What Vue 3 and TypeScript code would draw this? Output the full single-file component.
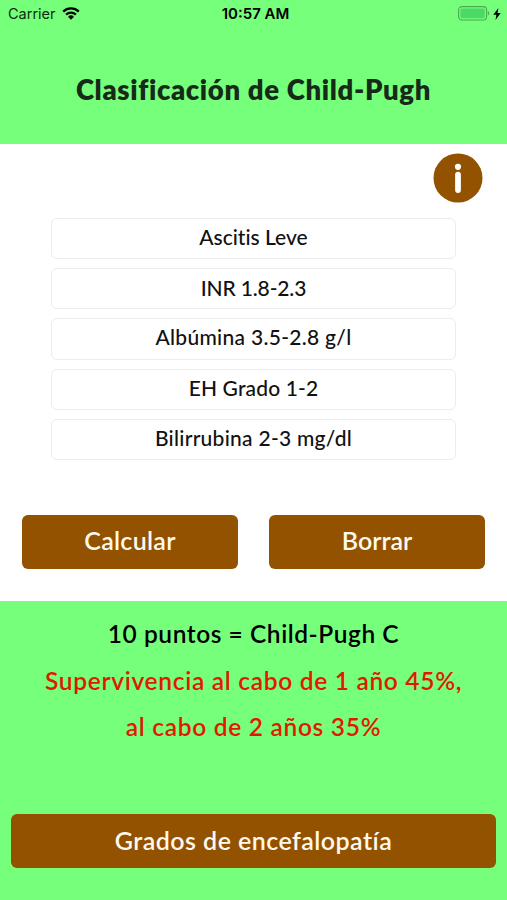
<script setup lang="ts">
import { ref } from 'vue'

interface Criterion {
  id: string
  label: string
}

const criteria = ref<Criterion[]>([
  { id: 'ascitis', label: 'Ascitis Leve' },
  { id: 'inr', label: 'INR 1.8-2.3' },
  { id: 'albumina', label: 'Albúmina 3.5-2.8 g/l' },
  { id: 'eh', label: 'EH Grado 1-2' },
  { id: 'bilirrubina', label: 'Bilirrubina 2-3 mg/dl' },
])
</script>

<template>
  <main class="screen">
    <div class="status">
      <div class="carrier">
        <span>Carrier</span>
        <svg class="wifi" viewBox="0 0 18 13" aria-hidden="true">
          <path d="M1.2 4.6a11.2 11.2 0 0 1 15.6 0M4.1 7.6a7 7 0 0 1 9.8 0" fill="none" stroke="currentColor" stroke-width="2.3" />
          <path d="M9 12.8 6 9.8a4.3 4.3 0 0 1 6 0z" fill="currentColor" />
        </svg>
      </div>
      <span class="time">10:57 AM</span>
      <div class="power">
        <svg class="battery" viewBox="0 0 32 15" aria-hidden="true">
          <rect x="0.6" y="0.6" width="28" height="13.4" rx="3.4" fill="none" stroke="#4da855" stroke-width="1.1" />
          <rect x="2.4" y="2.4" width="24.4" height="9.8" rx="1.8" fill="#4cd964" />
          <path d="M29.9 5v4.6c1.7-.6 1.7-4 0-4.6z" fill="#4da855" />
        </svg>
        <svg class="bolt" viewBox="0 0 8 12" aria-hidden="true">
          <path d="M5.4 0 0.3 6.8h3.1L2.5 12l5.2-7.1H4.5z" fill="currentColor" />
        </svg>
      </div>
    </div>

    <header class="header">
      <h1>Clasificación de Child-Pugh</h1>
    </header>

    <section class="form">
      <button class="info" type="button" aria-label="Información">
        <svg viewBox="0 0 50 50" aria-hidden="true">
          <circle cx="25" cy="25" r="24.5" fill="#925200" />
          <circle cx="25" cy="13.8" r="3.1" fill="#fff" />
          <rect x="22.1" y="18.8" width="5.8" height="21.2" rx="2.9" fill="#fff" />
        </svg>
      </button>
      <div class="fields">
        <button v-for="item in criteria" :key="item.id" :class="['field', item.id]" type="button">{{ item.label }}</button>
      </div>
      <div class="actions">
        <button class="action calculate" type="button">Calcular</button>
        <button class="action clear" type="button">Borrar</button>
      </div>
    </section>

    <section class="result">
      <p class="score">10 puntos = Child-Pugh C</p>
      <p class="survival">Supervivencia al cabo de 1 año 45%,</p>
      <p class="survival">al cabo de 2 años 35%</p>
      <button class="action grades" type="button">Grados de encefalopatía</button>
    </section>
  </main>
</template>

<style>
body {
  margin: 0;
}
</style>

<style scoped>
.screen {
  display: flex;
  flex-direction: column;
  width: 507px;
  height: 900px;
  overflow: hidden;
  background: #76ff7b;
  color: #000;
  font-family: Lato, "Open Sans", sans-serif;
  font-variant-ligatures: none;
}

button {
  margin: 0;
  padding: 0;
  border: 0;
  font: inherit;
  font-variant-ligatures: none;
  white-space: nowrap;
}

.status {
  display: grid;
  grid-template-columns: 1fr auto 1fr;
  align-items: center;
  box-sizing: border-box;
  height: 28px;
  padding: 0 6px 0 8px;
  font: 400 15px/28px Inter, sans-serif;
}

.carrier,
.power {
  display: flex;
  align-items: center;
}

.carrier {
  gap: 6px;
  color: #102a12;
  font-size: 14.5px;
}

.wifi {
  width: 18px;
  height: 13px;
  margin-top: -1px;
  color: #000;
}

.time {
  padding-left: 2px;
  font-weight: 600;
}

.power {
  justify-content: flex-end;
  gap: 3px;
}

.battery {
  width: 32px;
  height: 15px;
  margin-top: -1px;
}

.bolt {
  width: 8px;
  height: 12px;
  margin-top: -1px;
}

.header {
  height: 116px;
  text-align: center;
}

h1 {
  margin: 0;
  padding-top: 42px;
  color: #162a18;
  font-size: 27.5px;
  font-weight: 800;
  letter-spacing: 0.65px;
  line-height: 40px;
}

.form {
  box-sizing: border-box;
  height: 457px;
  padding: 9px 22px 0 22px;
  background: #fff;
}

.info {
  display: block;
  width: 50px;
  height: 50px;
  margin-left: auto;
  margin-right: 2px;
  background: none;
}

.info svg {
  display: block;
}

.fields {
  display: flex;
  flex-direction: column;
  gap: 9px;
  margin: 15px 29px 0 29px;
}

.field {
  box-sizing: border-box;
  height: 41.2px;
  padding-bottom: 3px;
  border: 1px solid #ececec;
  border-radius: 6px;
  background: #fff;
  color: #111;
  font-size: 21px;
  font-weight: 500;
  line-height: 36px;
}

.inr {
  padding-bottom: 2px;
  letter-spacing: -0.15px;
}

.albumina {
  letter-spacing: 0.3px;
}

.eh {
  letter-spacing: 0.15px;
}

.bilirrubina {
  padding-bottom: 2px;
  letter-spacing: 0.27px;
}

.actions {
  display: grid;
  grid-template-columns: 216px 216px;
  justify-content: space-between;
  margin-top: 55px;
}

.action {
  height: 54px;
  padding-bottom: 3px;
  border-radius: 6px;
  background: #925200;
  color: #fff8ec;
  font-size: 25px;
  font-weight: 600;
  line-height: 50px;
}

.calculate {
  letter-spacing: 0.3px;
}

.result {
  flex: 1;
  display: flex;
  flex-direction: column;
  padding: 10px 11px 32px;
  text-align: center;
}

.result p {
  margin: 0;
  font-size: 24.5px;
  font-weight: 600;
  letter-spacing: 0.7px;
  line-height: 46.5px;
  white-space: nowrap;
}

.result .score {
  letter-spacing: 0.55px;
}

.result .survival {
  color: #e01a00;
}

.grades {
  margin-top: auto;
  letter-spacing: 0.45px;
}
</style>
